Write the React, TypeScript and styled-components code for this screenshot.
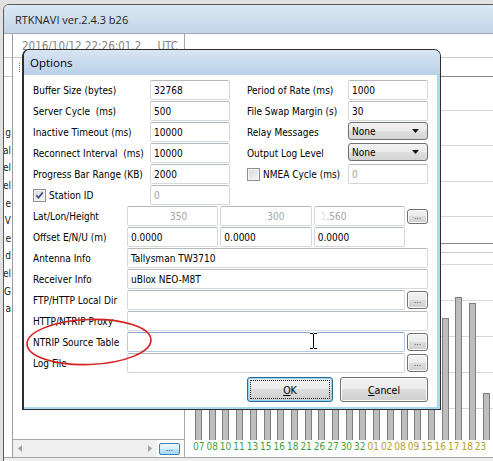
import React from 'react'
import styled, { createGlobalStyle } from 'styled-components'

const UI_FONT = `"DejaVu Sans Condensed", "DejaVu Sans", sans-serif`
const CAPTION_FONT = `"Open Sans", "Noto Sans", sans-serif`

const GREEN = '#3f9d3f'
const OLIVE = '#b3a12c'

const GlobalStyle = createGlobalStyle`
  html, body {
    margin: 0;
    padding: 0;
  }
  body {
    background: #e1e1e1;
    font-family: ${UI_FONT};
    font-stretch: condensed;
    font-size: 10px;
    color: #000;
  }
  * {
    box-sizing: border-box;
  }
`

const Desktop = styled.div`
  position: relative;
  width: 493px;
  height: 461px;
  overflow: hidden;
  background: #e1e1e1;
`

/* ---------- RTKNAVI main window (behind) ---------- */

const MainWindow = styled.div`
  position: absolute;
  left: 3px;
  top: 4px;
  width: 540px;
  display: flex;
  flex-direction: column;
  border: 1px solid #5b5b5b;
  border-radius: 6px 6px 0 0;
  background: #fff;
`

const MainTitle = styled.div`
  height: 29px;
  display: flex;
  align-items: center;
  padding-left: 11px;
  border-radius: 5px 5px 0 0;
  border-bottom: 1px solid #9ea7b2;
  background: linear-gradient(#dce7f3, #c3d5ea);
  font: 11px ${CAPTION_FONT};
  color: #1d1d1d;
`

const MainClient = styled.div`
  height: 424px;
  display: flex;
  border-bottom: 1px solid #a3a3a3;
`

const StatusBar = styled.div`
  height: 20px;
  background: #eeeeee;
`

const ListStrip = styled.div`
  width: 9px;
  flex-shrink: 0;
  display: flex;
  flex-direction: column;
  overflow: hidden;
  border-right: 1px solid #9c9c9c;
`

const ListTop = styled.div`
  height: 24px;
  flex-shrink: 0;
  border-bottom: 1px solid #c9c9c9;
`

const ListHeader = styled.div`
  height: 19px;
  flex-shrink: 0;
  border-bottom: 1px solid #c9c9c9;
`

const ListItems = styled.div`
  padding-top: 47px;
`

const ListItem = styled.div`
  height: 17.6px;
  display: flex;
  justify-content: flex-end;
  align-items: center;
  white-space: nowrap;
  color: #222;
  padding-right: 1px;
`

const LeftPanel = styled.div`
  width: 172px;
  flex-shrink: 0;
  display: flex;
  flex-direction: column;
  border-right: 1px solid #a8a8a8;
`

const TimeBox = styled.div`
  height: 24px;
  flex-shrink: 0;
  display: flex;
  align-items: center;
  justify-content: space-between;
  padding: 1px 6px 0 9px;
  border-bottom: 1px solid #c9c9c9;
  font-size: 11.5px;
  color: #858585;
`

const PanelBody = styled.div`
  flex: 1;
  padding: 5px 0 0 6px;
  border-bottom: 1px solid #a8a8a8;
`

const Grip = styled.div`
  width: 1px;
  height: 9px;
  border-left: 1px dotted #777;
`

const ScrollRow = styled.div`
  height: 17px;
  flex-shrink: 0;
  display: flex;
  align-items: center;
`

const ScrollBar = styled.div`
  width: 144px;
  height: 100%;
  display: flex;
  align-items: center;
  justify-content: space-between;
  padding: 0 5px 0 5px;
  background: #f0f0f0;
`

const MiniButton = styled.div`
  width: 21px;
  height: 12px;
  margin-left: 2px;
  display: flex;
  align-items: center;
  justify-content: center;
  border: 1px solid #3c7fb1;
  border-radius: 2px;
  background: linear-gradient(#eaf6fd, #d9f0fc 50%, #bee6fd 50%, #a7d9f5);
  font-size: 8px;
  line-height: 1;
  color: #333;
`

const RightPanel = styled.div`
  flex: 1;
  display: flex;
  flex-direction: column;
`

const TopStrip = styled.div`
  height: 24px;
  border-bottom: 1px solid #cfcfcf;
`

const Band = styled.div`
  height: 19px;
  border-bottom: 1px solid #8c8c8c;
`

const Sky = styled.div`
  height: 167px;
  border-bottom: 1px solid #8c8c8c;
  background: repeating-linear-gradient(
    to bottom,
    transparent 0,
    transparent 33px,
    #d5d5d5 33px,
    #d5d5d5 34px,
    transparent 34px,
    transparent 35.33px
  );
`

const Chart = styled.div`
  height: 196px;
  display: flex;
  align-items: flex-end;
  padding-left: 10px;
  background:
    linear-gradient(to bottom, transparent 8px, #c9c9c9 8px, #c9c9c9 9px, transparent 9px),
    repeating-linear-gradient(
      to bottom,
      transparent 0,
      transparent 20px,
      #d8d8d8 20px,
      #d8d8d8 21px,
      transparent 21px,
      transparent 36px
    );
`

const BarSlot = styled.div`
  width: 13.71px;
  flex-shrink: 0;
`

const Bar = styled.div`
  width: 7px;
  background: #bdbdbd;
  border: 1px solid #7e7e7e;
  border-bottom: none;
`

const LabelRow = styled.div`
  height: 17px;
  display: flex;
  padding: 1px 0 0 8px;
`

const SatLabel = styled.span<{ $color: string }>`
  width: 13.43px;
  flex-shrink: 0;
  font-size: 10px;
  color: ${p => p.$color};
`

/* ---------- Options dialog ---------- */

const Dialog = styled.div`
  position: absolute;
  left: 22px;
  top: 49px;
  width: 419px;
  height: 361px;
  display: flex;
  flex-direction: column;
  border: 1px solid #2e2e2e;
  border-left-width: 2px;
  border-radius: 7px 7px 0 0;
  background: #a7d9f1;
  overflow: hidden;
`

const DialogTitle = styled.div`
  height: 25px;
  flex-shrink: 0;
  display: flex;
  align-items: center;
  padding-left: 6px;
  background: linear-gradient(#d8e5f3, #bad0e8);
  font: 11.5px ${CAPTION_FONT};
  color: #000;
`

const DialogBody = styled.div`
  flex: 1;
  display: flex;
  padding: 0 3px 2px 0;
`

const Client = styled.div`
  flex: 1;
  display: flex;
  flex-direction: column;
  padding: 5px 9px;
  background: #fff;
`

const TopSection = styled.div`
  display: flex;
  gap: 17px;
`

const FieldColumn = styled.div<{ $labelWidth: number }>`
  display: grid;
  grid-template-columns: ${p => p.$labelWidth}px 80px;
  grid-auto-rows: 20px;
  row-gap: 1px;
`

const LowerGrid = styled.div`
  margin-top: 1px;
  display: grid;
  grid-template-columns: 92px repeat(3, 1fr) 21px;
  grid-auto-rows: 20px;
  column-gap: 2px;
  row-gap: 1px;
`

const Label = styled.span`
  align-self: center;
  white-space: pre;
`

const Field = styled.div<{ $span?: number; $muted?: boolean; $indent?: number; $hot?: boolean }>`
  grid-column: span ${p => p.$span ?? 1};
  display: flex;
  align-items: center;
  padding-left: ${p => p.$indent ?? 3}px;
  border: 1px solid ${p => (p.$hot ? '#b3cbe6' : '#d4d7db')};
  border-top-color: ${p => (p.$hot ? '#87a9d0' : '#b5b8bc')};
  border-radius: 2px;
  background: #fff;
  color: ${p => (p.$muted ? '#a5a5a5' : '#000')};
  white-space: pre;
  overflow: hidden;
`

const Faint = styled.span`
  color: #e2e2e2;
`

const Select = styled.div`
  height: 18px;
  display: flex;
  align-items: center;
  justify-content: space-between;
  padding: 0 8px 0 3px;
  border: 1px solid #707070;
  border-radius: 3px;
  background: linear-gradient(#f3f3f3, #ebebeb 48%, #dfdfdf 52%, #d3d3d3);
`

const CheckRow = styled.label`
  align-self: center;
  display: flex;
  align-items: center;
  gap: 3px;
  white-space: pre;
`

const CheckBox = styled.span`
  width: 13px;
  height: 13px;
  display: flex;
  align-items: center;
  justify-content: center;
  border: 1px solid #8e8f8f;
  background: linear-gradient(135deg, #d9d9d9, #f7f7f7);
  box-shadow: inset 0 0 0 1px #f4f4f4;
`

const DotsButton = styled.div<{ $compact?: boolean }>`
  align-self: center;
  height: ${p => (p.$compact ? 15 : 18)}px;
  display: flex;
  align-items: center;
  justify-content: center;
  border: 1px solid #707070;
  border-radius: 3px;
  background: linear-gradient(#f2f2f2, #ebebeb 50%, #dddddd 50%, #cfcfcf);
  box-shadow: inset 0 0 0 1px #fbfbfb;
  font-size: 8px;
  color: #444;
`

const ButtonBar = styled.div`
  margin-top: 4px;
  display: flex;
  justify-content: flex-end;
  gap: 7px;
`

const PushButton = styled.div<{ $width: number; $default?: boolean }>`
  width: ${p => p.$width}px;
  height: 25px;
  display: flex;
  align-items: center;
  justify-content: center;
  border: 1px solid ${p => (p.$default ? '#2f6b97' : '#707070')};
  border-radius: 3px;
  background: linear-gradient(#f2f2f2, #ebebeb 50%, #dddddd 50%, #cfcfcf);
  box-shadow: inset 0 0 0 1px ${p => (p.$default ? '#8ed3f2' : '#fbfbfb')};
  outline: ${p => (p.$default ? '1px dotted #222' : 'none')};
  outline-offset: -4px;
  font-size: 10.5px;
`

/* ---------- overlays ---------- */

const Annotation = styled.svg`
  position: absolute;
  left: 24px;
  top: 316px;
`

const Cursor = styled.svg`
  position: absolute;
  left: 309px;
  top: 332px;
`

/* ---------- data ---------- */

// only the tail of each list entry peeks out from under the splitter
const LIST_TAILS = ['g', 'al', 'el', 'el', 'e', 'V', 'e', 'd', 'el', 'G', 'a']

const SATS: { prn: string; h: number; c: string }[] = [
  { prn: '07', h: 118, c: GREEN },
  { prn: '08', h: 96, c: GREEN },
  { prn: '10', h: 130, c: GREEN },
  { prn: '11', h: 104, c: GREEN },
  { prn: '13', h: 88, c: GREEN },
  { prn: '15', h: 124, c: GREEN },
  { prn: '16', h: 112, c: GREEN },
  { prn: '18', h: 92, c: GREEN },
  { prn: '21', h: 138, c: GREEN },
  { prn: '26', h: 101, c: GREEN },
  { prn: '27', h: 84, c: GREEN },
  { prn: '30', h: 120, c: GREEN },
  { prn: '32', h: 98, c: GREEN },
  { prn: '01', h: 66, c: OLIVE },
  { prn: '02', h: 74, c: OLIVE },
  { prn: '08', h: 90, c: OLIVE },
  { prn: '09', h: 86, c: OLIVE },
  { prn: '15', h: 80, c: OLIVE },
  { prn: '16', h: 122, c: OLIVE },
  { prn: '17', h: 143, c: OLIVE },
  { prn: '18', h: 137, c: OLIVE },
  { prn: '23', h: 47, c: OLIVE },
]

const DownArrow = () => (
  <svg width="7" height="4" viewBox="0 0 7 4">
    <path d="M0 0h7L3.5 4z" fill="#111" />
  </svg>
)

const Tick = () => (
  <svg width="9" height="9" viewBox="0 0 9 9">
    <path d="M1.3 4.4l2.2 2.4L7.8 1.4" fill="none" stroke="#3b4f8e" strokeWidth="1.7" />
  </svg>
)

const ScrollArrow = ({ right }: { right?: boolean }) => (
  <svg width="4" height="7" viewBox="0 0 4 7">
    <path d={right ? 'M0 0l4 3.5L0 7z' : 'M4 0L0 3.5 4 7z'} fill="#a2a2a2" />
  </svg>
)

const Dots = ({ compact }: { compact?: boolean }) => <DotsButton $compact={compact}>...</DotsButton>

const App = () => (
  <Desktop>
    <GlobalStyle />

    <MainWindow>
      <MainTitle>RTKNAVI ver.2.4.3 b26</MainTitle>
      <MainClient>
        <ListStrip>
          <ListTop />
          <ListHeader />
          <ListItems>
            {LIST_TAILS.map((t, i) => (
              <ListItem key={i}>{t}</ListItem>
            ))}
          </ListItems>
        </ListStrip>

        <LeftPanel>
          <TimeBox>
            <span>2016/10/12 22:26:01.2</span>
            <span>UTC</span>
          </TimeBox>
          <PanelBody>
            <Grip />
          </PanelBody>
          <ScrollRow>
            <ScrollBar>
              <ScrollArrow />
              <ScrollArrow right />
            </ScrollBar>
            <MiniButton>...</MiniButton>
          </ScrollRow>
        </LeftPanel>

        <RightPanel>
          <TopStrip />
          <Band />
          <Sky />
          <Chart>
            {SATS.map((s, i) => (
              <BarSlot key={i}>
                <Bar style={{ height: s.h }} />
              </BarSlot>
            ))}
          </Chart>
          <LabelRow>
            {SATS.map((s, i) => (
              <SatLabel key={i} $color={s.c}>
                {s.prn}
              </SatLabel>
            ))}
          </LabelRow>
        </RightPanel>
      </MainClient>
      <StatusBar />
    </MainWindow>

    <Dialog>
      <DialogTitle>Options</DialogTitle>
      <DialogBody>
        <Client>
          <TopSection>
            <FieldColumn $labelWidth={117}>
              <Label>Buffer Size (bytes)</Label>
              <Field>32768</Field>
              <Label>Server Cycle  (ms)</Label>
              <Field>500</Field>
              <Label>Inactive Timeout (ms)</Label>
              <Field>10000</Field>
              <Label>Reconnect Interval  (ms)</Label>
              <Field>10000</Field>
              <Label>Progress Bar Range (KB)</Label>
              <Field>2000</Field>
              <CheckRow>
                <CheckBox>
                  <Tick />
                </CheckBox>
                Station ID
              </CheckRow>
              <Field $muted>0</Field>
            </FieldColumn>

            <FieldColumn $labelWidth={101}>
              <Label>Period of Rate (ms)</Label>
              <Field>1000</Field>
              <Label>File Swap Margin (s)</Label>
              <Field>30</Field>
              <Label>Relay Messages</Label>
              <Select>
                None
                <DownArrow />
              </Select>
              <Label>Output Log Level</Label>
              <Select>
                None
                <DownArrow />
              </Select>
              <CheckRow>
                <CheckBox />
                NMEA Cycle (ms)
              </CheckRow>
              <Field $muted>0</Field>
            </FieldColumn>
          </TopSection>

          <LowerGrid>
            <Label>Lat/Lon/Height</Label>
            <Field $muted $indent={42}>
              350
            </Field>
            <Field $muted $indent={46}>
              300
            </Field>
            <Field $muted $indent={6}>
              <Faint>1</Faint>.560
            </Field>
            <Dots compact />

            <Label>Offset E/N/U (m)</Label>
            <Field>0.0000</Field>
            <Field>0.0000</Field>
            <Field>0.0000</Field>
            <span />

            <Label>Antenna Info</Label>
            <Field $span={4}>Tallysman TW3710</Field>

            <Label>Receiver Info</Label>
            <Field $span={4}>uBlox NEO-M8T</Field>

            <Label>FTP/HTTP Local Dir</Label>
            <Field $span={3} />
            <Dots />

            <Label>HTTP/NTRIP Proxy</Label>
            <Field $span={4} />

            <Label>NTRIP Source Table</Label>
            <Field $span={3} $hot />
            <Dots />

            <Label>Log File</Label>
            <Field $span={3} />
            <Dots />
          </LowerGrid>

          <ButtonBar>
            <PushButton $width={86} $default>
              <span>
                <u>O</u>K
              </span>
            </PushButton>
            <PushButton $width={88}>
              <span>
                <u>C</u>ancel
              </span>
            </PushButton>
          </ButtonBar>
        </Client>
      </DialogBody>
    </Dialog>

    <Annotation width="134" height="54" viewBox="0 0 134 54">
      <ellipse
        cx="65"
        cy="26"
        rx="62"
        ry="22.5"
        fill="none"
        stroke="#d61f1f"
        strokeWidth="1.6"
        transform="rotate(-2 65 26)"
      />
    </Annotation>

    <Cursor width="9" height="18" viewBox="0 0 9 18">
      <path d="M1 1.5h3M5 1.5h3M4.5 2v14M1 16.5h3M5 16.5h3" stroke="#fff" strokeWidth="3" fill="none" />
      <path d="M1 1.5h3M5 1.5h3M4.5 2v14M1 16.5h3M5 16.5h3" stroke="#000" strokeWidth="1" fill="none" />
    </Cursor>
  </Desktop>
)

export default App
